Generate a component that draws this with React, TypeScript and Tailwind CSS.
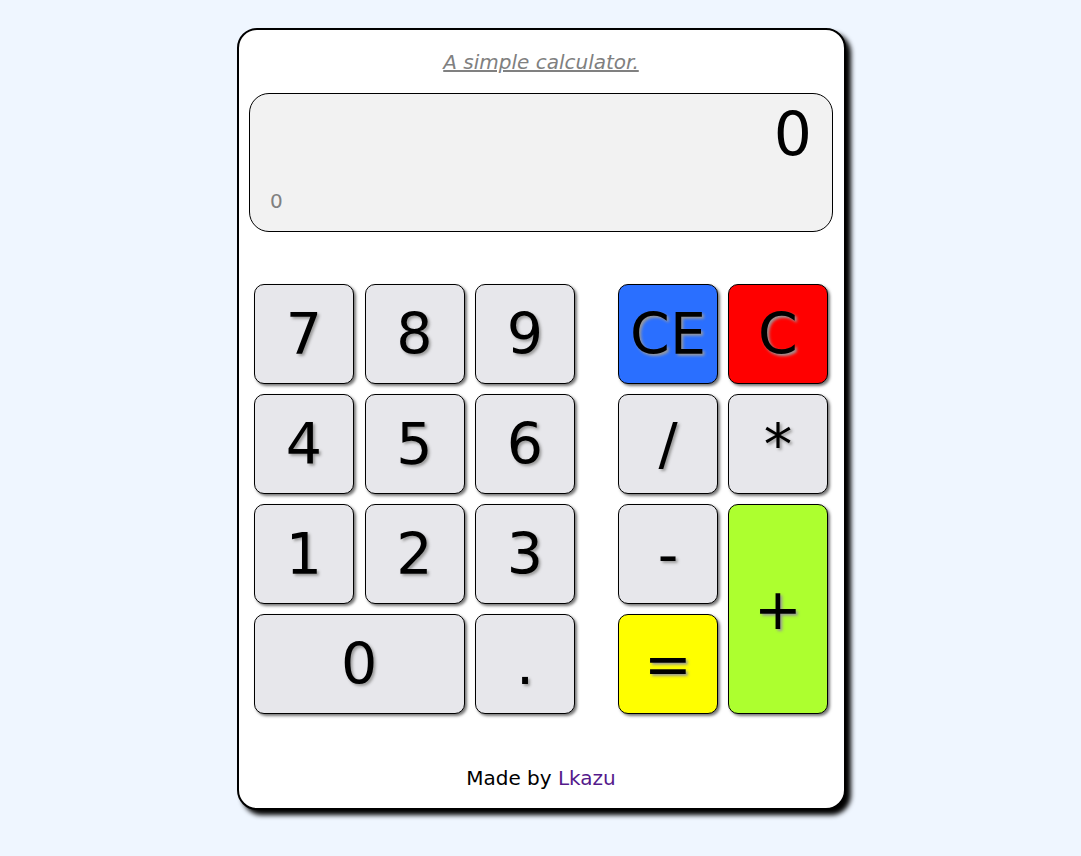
import React from "react";

const base =
  "flex items-center justify-center border border-black rounded-[10px] shadow-[2px_2px_3px_#777] text-[57px] text-black [text-shadow:2px_2px_3px_#999] leading-none";

function Btn({ label, cls = "", color = "bg-[#e7e7eb]" }: { label: string; cls?: string; color?: string }) {
  return <div className={`${base} ${color} ${cls}`}>{label}</div>;
}

export default function App() {
  return (
    <div
      className="min-h-[856px] bg-[#eff6ff] pt-[28px] pl-[237px]"
      style={{ fontFamily: '"DejaVu Sans", Verdana, sans-serif' }}
    >
      <div className="w-[609px] bg-white border-2 border-black rounded-[20px] shadow-[5px_5px_5px_#000] pl-[10px] pr-[11px] pt-[20px] pb-[18px] flex flex-col">
        <div className="text-center text-[20px] leading-[24px] italic underline text-[#808080]">
          A simple calculator.
        </div>
        <div className="mt-[19px] h-[139px] border border-black rounded-[20px] bg-[#f2f2f2] flex flex-col justify-between pt-[5px] pb-[18px]">
          <div className="text-right text-[60px] leading-[70px] pr-[20px] text-black">0</div>
          <div className="pl-[20px] text-[20px] leading-[24px] text-[#808080]">0</div>
        </div>
        <div className="mt-[52px] flex ml-[5px]">
          <div className="grid grid-cols-[repeat(3,100px)] grid-rows-[repeat(4,100px)] gap-y-[10px] gap-x-[10.5px]">
            <Btn label="7" />
            <Btn label="8" />
            <Btn label="9" />
            <Btn label="4" />
            <Btn label="5" />
            <Btn label="6" />
            <Btn label="1" />
            <Btn label="2" />
            <Btn label="3" />
            <Btn label="0" cls="col-span-2" />
            <Btn label="." />
          </div>
          <div className="ml-[43px] grid grid-cols-[repeat(2,100px)] grid-rows-[repeat(4,100px)] gap-y-[10px] gap-x-[10px]">
            <Btn label="CE" color="bg-[#2a6fff]" />
            <Btn label="C" color="bg-[#ff0000]" />
            <Btn label="/" />
            <Btn label="*" />
            <Btn label="-" />
            <Btn label="+" cls="row-span-2" color="bg-[#adff2f]" />
            <Btn label="=" color="bg-[#ffff00]" />
          </div>
        </div>
        <div className="mt-[52px] text-center text-[20px] leading-[24px] text-black">
          Made by <span className="text-[#551a8b]">Lkazu</span>
        </div>
      </div>
    </div>
  );
}
